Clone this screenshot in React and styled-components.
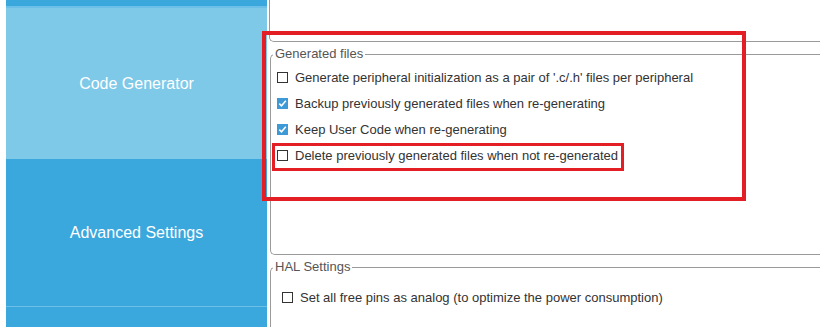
import React from "react";
import styled, { createGlobalStyle } from "styled-components";

const GlobalStyle = createGlobalStyle`
  html, body { margin: 0; padding: 0; background: #fff; overflow: hidden; }
  body { font-family: "Liberation Sans", Arial, sans-serif; }
`;

const Page = styled.div`
  position: relative;
  width: 820px;
  height: 327px;
  display: flex;
  overflow: hidden;
  background: #fff;
`;

const Sidebar = styled.nav`
  margin-left: 6px;
  width: 261px;
  flex: none;
  display: flex;
  flex-direction: column;
  background: #3aa8dc;
`;

const NavItem = styled.div`
  flex: none;
  height: ${(p) => p.$h}px;
  display: flex;
  align-items: center;
  justify-content: center;
  background: ${(p) => (p.$active ? "#7ec8e8" : "#3aa8dc")};
  border-bottom: ${(p) => (p.$line ? `${p.$line}px solid #6cc0e7` : "none")};
  color: #fff;
  font-size: 16px;
`;

const Content = styled.main`
  margin-left: 2px;
  flex: none;
  width: 700px;
  display: flex;
  flex-direction: column;
`;

const UpperBox = styled.div`
  flex: none;
  height: 41px;
  border-left: 1px solid #9a9a9a;
  border-bottom: 1px solid #9a9a9a;
  border-bottom-left-radius: 5px;
`;

const Group = styled.fieldset`
  flex: none;
  margin: ${(p) => p.$mt}px 0 0 1px;
  padding: 0 0 0 ${(p) => p.$pl}px;
  height: ${(p) => p.$h}px;
  box-sizing: border-box;
  border: 1px solid #9a9a9a;
  border-right: none;
  border-radius: 5px 0 0 5px;
  display: flex;
  flex-direction: column;
`;

const Legend = styled.legend`
  padding: 0 2px;
  margin-left: ${(p) => p.$ml}px;
  font-size: 13px;
  line-height: 14px;
  color: #555;
`;

const Row = styled.label`
  flex: none;
  height: 26px;
  display: flex;
  align-items: center;
  gap: 7px;
  font-size: 13px;
  color: #333;
  white-space: nowrap;
`;

const Box = styled.span`
  width: 11px;
  height: 11px;
  box-sizing: border-box;
  flex: none;
  border: 1px solid ${(p) => (p.$checked ? "#3d9ad6" : "#333")};
  background: ${(p) => (p.$checked ? "#3d9ad6" : "#fff")};
  display: flex;
  align-items: center;
  justify-content: center;
`;

const Spacer = styled.div`
  flex: none;
  height: ${(p) => p.$h}px;
`;

const Mark = styled.div`
  position: absolute;
  left: ${(p) => p.$x}px;
  top: ${(p) => p.$y}px;
  width: ${(p) => p.$w}px;
  height: ${(p) => p.$h}px;
  box-sizing: border-box;
  border: ${(p) => p.$b}px solid #e31e24;
  pointer-events: none;
`;

function Check({ checked, children }) {
  return (
    <Row>
      <Box $checked={checked}>
        {checked && (
          <svg width="9" height="9" viewBox="0 0 9 9">
            <path d="M1.3 4.6 L3.5 6.8 L7.8 1.8" fill="none" stroke="#fff" strokeWidth="1.5" />
          </svg>
        )}
      </Box>
      {children}
    </Row>
  );
}

export default function App() {
  return (
    <>
      <GlobalStyle />
      <Page>
        <Sidebar>
          <NavItem $h={6} $line={2} />
          <NavItem $h={151} $active>Code Generator</NavItem>
          <NavItem $h={147} $line={1}>Advanced Settings</NavItem>
          <NavItem $h={30} />
        </Sidebar>
        <Content>
          <UpperBox />
          <Group $mt={5} $pl={6} $h={208}>
            <Legend $ml={-4}>Generated files</Legend>
            <Spacer $h={3} />
            <Check>Generate peripheral initialization as a pair of '.c/.h' files per peripheral</Check>
            <Check checked>Backup previously generated files when re-generating</Check>
            <Check checked>Keep User Code when re-generating</Check>
            <Check>Delete previously generated files when not re-generated</Check>
          </Group>
          <Group $mt={5} $pl={11} $h={120}>
            <Legend $ml={-9}>HAL Settings</Legend>
            <Spacer $h={10} />
            <Check>Set all free pins as analog (to optimize the power consumption)</Check>
          </Group>
        </Content>
        <Mark $x={262} $y={31} $w={484} $h={170} $b={4} />
        <Mark $x={272} $y={143} $w={352} $h={28} $b={3} />
      </Page>
    </>
  );
}
